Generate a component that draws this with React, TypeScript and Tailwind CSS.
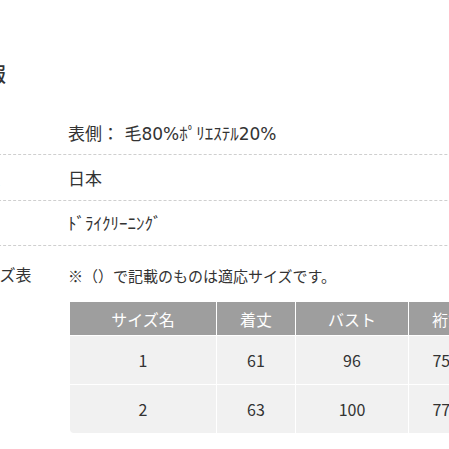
const specRows = [
  { label: '素材', value: '表側： 毛80%ﾎﾟﾘｴｽﾃﾙ20%', h: 'h-[45px] items-end pb-[11px]' },
  { label: '産地', value: '日本', h: 'h-[46px] items-center pt-[4px]' },
  { label: '洗濯', value: 'ﾄﾞﾗｲｸﾘｰﾆﾝｸﾞ', h: 'h-[45px] items-center pt-[3px]' },
];

const sizeHead = ['サイズ名', '着丈', 'バスト', '裄丈', '着用目安'];
const sizeRows = [
  ['1', '61', '96', '75.5', 'M'],
  ['2', '63', '100', '77.5', 'L'],
];

function SizeTable() {
  return (
    <div className="grid grid-cols-[146px_78px_112px_78px_112px] gap-[1px] bg-white w-[530px]">
      {sizeHead.map((h) => (
        <div
          key={h}
          className="h-[33px] bg-[#9e9e9e] text-white text-[16px] flex items-center justify-center"
        >
          {h}
        </div>
      ))}
      {sizeRows.map((row, r) =>
        row.map((cell, i) => (
          <div
            key={`${r}-${i}`}
            className={`h-[48px] bg-[#f1f1f1] text-[#333] text-[16px] flex items-center justify-center ${
              r === sizeRows.length - 1 && i === 0 ? 'rounded-bl-[4px]' : ''
            }`}
          >
            {cell}
          </div>
        ))
      )}
    </div>
  );
}

export default function App() {
  return (
    <main
      className="w-[449px] h-[449px] overflow-hidden bg-white text-[#333]"
      style={{ fontFamily: '"Noto Sans CJK JP", "Noto Sans", sans-serif' }}
    >
      <div className="pt-[59px] h-[110px]">
        <h2 className="ml-[-74px] text-[20px] leading-[30px] font-medium text-[#333]">商品情報</h2>
      </div>
      <div className="ml-[-32px] w-[700px]">
        {specRows.map((row) => (
          <div key={row.label} className={`flex ${row.h} border-b border-dashed border-[#cfcfcf]`}>
            <div className="w-[100px] text-[16px] shrink-0">{row.label}</div>
            <div
              className="text-[17px] leading-none"
              style={{ fontFamily: '"DejaVu Sans", "Noto Sans CJK JP", sans-serif' }}
            >
              {row.value}
            </div>
          </div>
        ))}
        <div className="flex pt-[19px]">
          <div className="w-[100px] shrink-0 text-[16px] leading-[18px]">サイズ表</div>
          <div className="flex flex-col">
            <p className="text-[15px] leading-[18px] mt-[2px]">※（）で記載のものは適応サイズです。</p>
            <div className="mt-[17px] ml-[2px]">
              <SizeTable />
            </div>
          </div>
        </div>
      </div>
    </main>
  );
}
